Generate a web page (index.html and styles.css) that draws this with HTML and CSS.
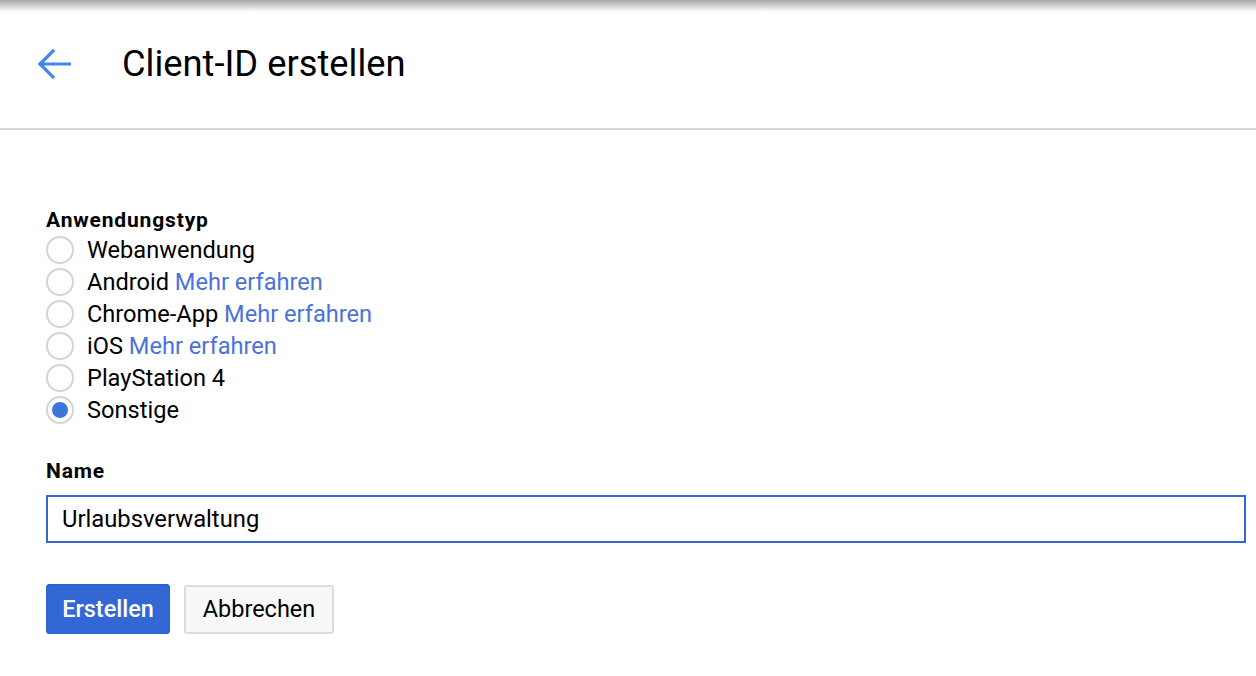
FILE: index.html
```html
<!DOCTYPE html>
<html lang="de">
<head>
<meta charset="utf-8">
<link rel="stylesheet" href="styles.css">
</head>
<body>
<div class="topshadow"></div>
<header class="header">
  <svg class="back" width="34" height="30" viewBox="0 0 34 30"><path d="M33 15H3M16 2L3 15L16 28" fill="none" stroke="#4285f4" stroke-width="3.2" stroke-linecap="square"/></svg>
  <h1 class="title">Client-ID erstellen</h1>
</header>
<main class="content">
  <div class="label">Anwendungstyp</div>
  <div class="radios">
    <div class="row"><span class="radio"></span><span>Webanwendung</span></div>
    <div class="row"><span class="radio"></span><span>Android <a class="link">Mehr erfahren</a></span></div>
    <div class="row"><span class="radio"></span><span>Chrome-App <a class="link">Mehr erfahren</a></span></div>
    <div class="row"><span class="radio"></span><span>iOS <a class="link">Mehr erfahren</a></span></div>
    <div class="row"><span class="radio"></span><span>PlayStation 4</span></div>
    <div class="row"><span class="radio checked"></span><span>Sonstige</span></div>
  </div>
  <div class="label name-label">Name</div>
  <div class="input">Urlaubsverwaltung</div>
  <div class="buttons">
    <button class="btn primary">Erstellen</button>
    <button class="btn secondary">Abbrechen</button>
  </div>
</main>
</body>
</html>
```
FILE: styles.css
```css
* { box-sizing: border-box; }
html, body { margin: 0; padding: 0; background: #fff; }
body { font-family: Roboto, "Liberation Sans", Arial, sans-serif; color: #000; width: 1256px; height: 676px; overflow: hidden; position: relative; }
.topshadow { position: absolute; top: 0; left: 0; right: 0; height: 12px; background: linear-gradient(#a8a8a8, rgba(255,255,255,0)); }
.header { height: 130px; border-bottom: 2px solid #d6d6d6; display: flex; align-items: center; padding-left: 37px; padding-bottom: 2px; }
.back { display: block; margin-top: 1px; }
.title { font-weight: 400; font-size: 36.3px; margin: 0 0 0 51px; }
.content { padding: 77px 0 0 46px; }
.label { font-weight: 700; font-size: 21px; line-height: 26px; letter-spacing: 0.85px; }
.radios { display: flex; flex-direction: column; margin-top: 1px; }
.row { display: flex; align-items: center; height: 32px; font-size: 23.6px; }
.radio { width: 28px; height: 28px; border: 2px solid #d4d4d4; border-radius: 50%; margin-right: 13px; display: flex; align-items: center; justify-content: center; flex: none; }
.radio.checked::after { content: ""; width: 16px; height: 16px; background: #3b77db; border-radius: 50%; }
.link { color: #4a73db; }
.name-label { margin-top: 32px; }
.input { margin-top: 11px; width: 1200px; height: 48px; border: 2px solid #3367d6; font-size: 23.8px; padding-left: 14px; display: flex; align-items: center; }
.buttons { display: flex; gap: 14px; margin-top: 41px; align-items: center; }
.btn { font-family: inherit; font-size: 23.5px; height: 50px; border-radius: 3px; padding: 0; }
.primary { background: #3367d6; color: #fff; border: 1px solid #2f5fc7; font-weight: 500; width: 124px; }
.secondary { background: #f8f8f8; color: #000; border: 2px solid #dcdcdc; height: 49px; width: 150px; }
```
